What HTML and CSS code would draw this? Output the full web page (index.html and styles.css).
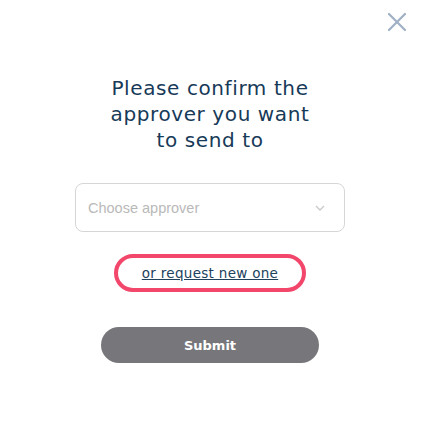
FILE: index.html
```html
<!DOCTYPE html>
<html>
<head>
<meta charset="utf-8">
<link rel="stylesheet" href="styles.css">
</head>
<body>
<div class="modal">
  <button class="close" aria-label="Close">
    <svg width="20" height="20" viewBox="0 0 20 20"><path d="M2 2 L18 18 M18 2 L2 18" stroke="#9fb0c4" stroke-width="2.2" stroke-linecap="round" fill="none"/></svg>
  </button>
  <h1 class="title">Please confirm the<br>approver you want<br>to send to</h1>
  <div class="select">
    <span class="placeholder">Choose approver</span>
    <svg class="chev" width="10" height="6" viewBox="0 0 10 6"><path d="M1 1 L5 5 L9 1" stroke="#c8c8c8" stroke-width="1.3" fill="none"/></svg>
  </div>
  <div class="request"><a href="#">or request new one</a></div>
  <button class="submit">Submit</button>
</div>
</body>
</html>
```
FILE: styles.css
```css
html, body { margin: 0; padding: 0; background: #fff; }
.modal {
  position: relative;
  box-sizing: border-box;
  width: 424px;
  height: 438px;
  padding-right: 4px;
  display: flex;
  flex-direction: column;
  align-items: center;
  font-family: "DejaVu Sans", sans-serif;
}
.close {
  position: absolute;
  top: 12px;
  right: 17px;
  width: 20px;
  height: 20px;
  padding: 0;
  border: 0;
  background: none;
  display: flex;
}
.title {
  margin: 75px 0 0;
  font-size: 20px;
  line-height: 26px;
  font-weight: 400;
  color: #173a58;
  text-align: center;
  letter-spacing: 0.6px;
}
.select {
  margin-top: 30px;
  box-sizing: border-box;
  width: 270px;
  height: 49px;
  border: 1px solid #d6d6d6;
  border-radius: 8px;
  display: flex;
  align-items: center;
  justify-content: space-between;
  padding: 0 19px 0 12px;
}
.placeholder {
  font-family: "Liberation Sans", Arial, sans-serif;
  font-size: 14.5px;
  color: #b9b9b9;
}
.request {
  margin-top: 22px;
  box-sizing: border-box;
  width: 192px;
  height: 38px;
  border: 4px solid #f2466b;
  border-radius: 19px;
  display: flex;
  align-items: center;
  justify-content: center;
}
.request a {
  font-size: 13.5px;
  color: #21425c;
  text-decoration: underline;
  letter-spacing: 0.3px;
}
.submit {
  margin-top: 35px;
  width: 218px;
  height: 36px;
  border: 0;
  border-radius: 18px;
  background: #77777b;
  color: #fff;
  font-family: "DejaVu Sans", sans-serif;
  font-weight: 700;
  font-size: 13px;
}
```
